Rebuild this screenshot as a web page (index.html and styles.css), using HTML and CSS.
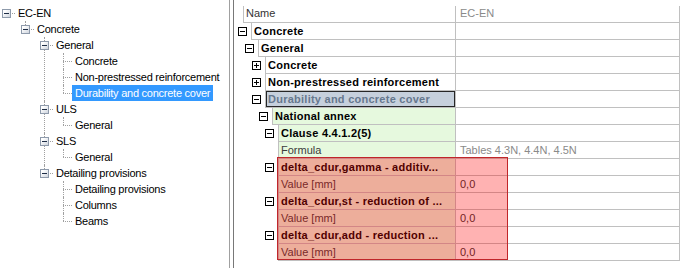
FILE: index.html
```html
<!DOCTYPE html>
<html lang="en">
<head>
    <meta charset="UTF-8">
    <title>Settings - EC-EN</title>
    <link rel="stylesheet" href="styles.css">
</head>
<body>
    <div class="tree-pane">
        <ul class="tree">
            <li>
                <div class="item"><span class="tog"></span><span class="label">EC-EN</span></div>
                <ul>
                    <li>
                        <div class="item"><span class="tog"></span><span class="label">Concrete</span></div>
                        <ul>
                            <li>
                                <div class="item"><span class="tog"></span><span class="label">General</span></div>
                                <ul>
                                    <li><div class="item"><span class="gap"></span><span class="label">Concrete</span></div></li>
                                    <li><div class="item"><span class="gap"></span><span class="label">Non-prestressed reinforcement</span></div></li>
                                    <li><div class="item"><span class="gap"></span><span class="label selected">Durability and concrete cover</span></div></li>
                                </ul>
                            </li>
                            <li>
                                <div class="item"><span class="tog"></span><span class="label">ULS</span></div>
                                <ul>
                                    <li><div class="item"><span class="gap"></span><span class="label">General</span></div></li>
                                </ul>
                            </li>
                            <li>
                                <div class="item"><span class="tog"></span><span class="label">SLS</span></div>
                                <ul>
                                    <li><div class="item"><span class="gap"></span><span class="label">General</span></div></li>
                                </ul>
                            </li>
                            <li>
                                <div class="item"><span class="tog"></span><span class="label">Detailing provisions</span></div>
                                <ul>
                                    <li><div class="item"><span class="gap"></span><span class="label">Detailing provisions</span></div></li>
                                    <li><div class="item"><span class="gap"></span><span class="label">Columns</span></div></li>
                                    <li><div class="item"><span class="gap"></span><span class="label">Beams</span></div></li>
                                </ul>
                            </li>
                        </ul>
                    </li>
                </ul>
            </li>
        </ul>
    </div>

    <div class="grid-pane">
        <div class="grid-head">
            <span class="ind"></span>
            <div class="hcell name">Name</div>
            <div class="hcell val">EC-EN</div>
        </div>

        <div class="grow l0 group">
            <span class="ind"><i class="box"></i></span>
            <div class="cell name">Concrete</div><div class="cell val"></div>
        </div>
        <div class="grow l1 group">
            <span class="ind"><i class="box"></i></span>
            <div class="cell name">General</div><div class="cell val"></div>
        </div>
        <div class="grow l2 group">
            <span class="ind"><i class="box plus"></i></span>
            <div class="cell name">Concrete</div><div class="cell val"></div>
        </div>
        <div class="grow l2 group">
            <span class="ind"><i class="box plus"></i></span>
            <div class="cell name">Non-prestressed reinforcement</div><div class="cell val"></div>
        </div>
        <div class="grow l2 group">
            <span class="ind"><i class="box"></i></span>
            <div class="cell name current">Durability and concrete cover</div><div class="cell val"></div>
        </div>
        <div class="grow l3 group">
            <span class="ind"><i class="box"></i></span>
            <div class="cell name green">National annex</div><div class="cell val"></div>
        </div>
        <div class="grow l4 group">
            <span class="ind"><i class="box"></i></span>
            <div class="cell name green">Clause 4.4.1.2(5)</div><div class="cell val"></div>
        </div>
        <div class="grow l4">
            <span class="ind"></span>
            <div class="cell name green">Formula</div><div class="cell val muted">Tables 4.3N, 4.4N, 4.5N</div>
        </div>
        <div class="grow l4 group">
            <span class="ind"><i class="box"></i></span>
            <div class="cell name green">delta_cdur,gamma - additiv...</div><div class="cell val"></div>
        </div>
        <div class="grow l4">
            <span class="ind"></span>
            <div class="cell name green">Value [mm]</div><div class="cell val">0,0</div>
        </div>
        <div class="grow l4 group">
            <span class="ind"><i class="box"></i></span>
            <div class="cell name green">delta_cdur,st - reduction of ...</div><div class="cell val"></div>
        </div>
        <div class="grow l4">
            <span class="ind"></span>
            <div class="cell name green">Value [mm]</div><div class="cell val">0,0</div>
        </div>
        <div class="grow l4 group">
            <span class="ind"><i class="box"></i></span>
            <div class="cell name green">delta_cdur,add - reduction ...</div><div class="cell val"></div>
        </div>
        <div class="grow l4">
            <span class="ind"></span>
            <div class="cell name green">Value [mm]</div><div class="cell val">0,0</div>
        </div>

        <!-- highlight over the three delta_cdur groups -->
        <div class="mark"></div>
    </div>
</body>
</html>
```

FILE: styles.css
```css
body {
    margin: 0;
    height: 268px;
    background: #fff;
    font-family: "Liberation Sans", Arial, sans-serif;
    font-size: 11px;
    color: #000;
    display: flex;
    overflow: hidden;
}

/* left tree */
.tree-pane {
    width: 229px;
    border-right: 1px solid #a0a0a0;
    margin-right: 3px;
    flex: none;
}
.tree, .tree ul {
    list-style: none;
    margin: 0;
    padding: 0;
}
.tree {
    padding: 5px 0 0 2px;
}
.tree ul {
    padding-left: 19px;
}
.tree li {
    position: relative;
}
.tree ul > li::before {
    content: '';
    position: absolute;
    left: 4px;
    top: 0;
    bottom: 0;
    border-left: 1px dotted #a0a0a0;
}
.tree ul > li:last-child::before {
    bottom: auto;
    height: 8px;
}
.item {
    position: relative;
    height: 16px;
    display: flex;
    align-items: center;
}
.item::before {
    content: '';
    position: absolute;
    left: 4px;
    top: 8px;
    width: 9px;
    border-top: 1px dotted #a0a0a0;
}
.tog, .gap {
    width: 9px;
    height: 9px;
    margin-right: 4px;
    flex: none;
    box-sizing: border-box;
}
.tog {
    position: relative;
    z-index: 1;
    border: 1px solid #8e9aab;
    background: linear-gradient(135deg, #fff 20%, #cfd5de);
}
.tog::after {
    content: '';
    position: absolute;
    left: 1px;
    top: 3px;
    width: 5px;
    height: 1px;
    background: #1e2d46;
}
.label {
    position: relative;
    z-index: 1;
    padding: 0 3px;
    line-height: 16px;
    white-space: nowrap;
    letter-spacing: -0.25px;
}
.label.selected {
    background: #3399ff;
    color: #fff;
}

/* right property grid */
.grid-pane {
    position: relative;
    flex: none;
    width: 446px;
    border-left: 1px solid #787878;
}
.grid-head, .grow {
    display: flex;
}
.grid-head {
    margin-top: 6px;
    height: 16px;
    border-bottom: 1px solid #c0c0c0;
    border-right: 1px solid #c0c0c0;
    margin-left: 9px;
}
.grid-head .ind {
    display: none;
}
.hcell {
    box-sizing: border-box;
    border-left: 1px solid #c0c0c0;
    line-height: 15px;
    padding-left: 2px;
    color: #333;
}
.hcell.name {
    flex: 1;
}
.hcell.val {
    width: 224px;
    padding-left: 4px;
    color: #8a8a8a;
}
.grow {
    height: 17px;
}
.ind {
    flex: none;
    display: flex;
    align-items: center;
    justify-content: flex-end;
    padding-right: 4px;
    box-sizing: border-box;
}
.l0 .ind { width: 17px; }
.l1 .ind { width: 24px; }
.l2 .ind { width: 31px; }
.l3 .ind { width: 38px; }
.l4 .ind { width: 44px; }

.box {
    position: relative;
    width: 9px;
    height: 9px;
    box-sizing: border-box;
    border: 1px solid #000;
    background: #fff;
}
.box::before {
    content: '';
    position: absolute;
    left: 1px;
    top: 3px;
    width: 5px;
    height: 1px;
    background: #000;
}
.box.plus::after {
    content: '';
    position: absolute;
    left: 3px;
    top: 1px;
    width: 1px;
    height: 5px;
    background: #000;
}
.cell {
    box-sizing: border-box;
    height: 17px;
    line-height: 16px;
    border-left: 1px solid #c0c0c0;
    border-bottom: 1px solid #c0c0c0;
    white-space: nowrap;
    overflow: hidden;
    color: #3c3c3c;
}
.cell.name {
    flex: 1;
    padding-left: 2px;
}
.cell.val {
    width: 225px;
    flex: none;
    padding-left: 4px;
    border-right: 1px solid #c0c0c0;
    color: #333;
}
.cell.val.muted {
    color: #8a8a8a;
}
.group .cell.name {
    font-weight: bold;
    color: #000;
    letter-spacing: 0.25px;
}
.cell.green {
    background: #e6f9de;
}
.cell.current {
    background: #c6d0dc;
    box-shadow: inset 0 0 0 1px #262626;
    color: #66788e !important;
}

.mark {
    position: absolute;
    left: 43px;
    top: 157px;
    width: 231px;
    height: 103px;
    box-sizing: border-box;
    border: 1px solid #c0262a;
    background: rgba(255, 0, 0, 0.3);
}
```
